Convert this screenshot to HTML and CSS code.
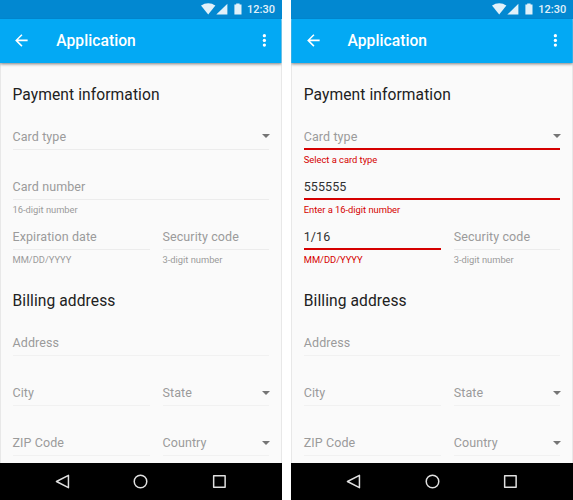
FILE: index.html
```html
<!DOCTYPE html>
<html lang="en">
<head>
<meta charset="utf-8">
<title>Application</title>
<link rel="stylesheet" href="styles.css">
</head>
<body>
<svg class="defs" aria-hidden="true">
  <symbol id="status" viewBox="0 0 45 13">
    <path d="M0 2.6C4.2-.7 10.3-.7 14.4 2.6L7.2 11.6z"/>
    <path d="M26.4.7v10.9H15.3z"/>
    <path d="M33.4 1.5h1.8V.4h3.4v1.1h1.9v10.1h-7.1z"/>
  </symbol>
  <symbol id="back" viewBox="0 0 24 24"><path d="M20 11H7.83l5.59-5.59L12 4l-8 8 8 8 1.41-1.41L7.83 13H20v-2z"/></symbol>
  <symbol id="more" viewBox="0 0 24 24"><circle cx="12" cy="6" r="2.1"/><circle cx="12" cy="12" r="2.1"/><circle cx="12" cy="18" r="2.1"/></symbol>
  <symbol id="nav-back" viewBox="0 0 16 16"><path d="M13.6 2.2v11.6L2.3 8z"/></symbol>
  <symbol id="nav-home" viewBox="0 0 16 16"><circle cx="8" cy="8" r="5.9"/></symbol>
  <symbol id="nav-recent" viewBox="0 0 16 16"><rect x="2.5" y="2.5" width="10.8" height="10.8"/></symbol>
</svg>
<main class="screens">
  <section class="phone">
    <div class="status-bar"><svg class="status-icons"><use href="#status"/></svg><span>12:30</span></div>
    <header class="app-bar"><svg class="icon"><use href="#back"/></svg><h1>Application</h1><svg class="icon"><use href="#more"/></svg></header>
    <div class="form">
      <h2>Payment information</h2>
      <div class="field select"><div class="value">Card type</div></div>
      <div class="field"><div class="value">Card number</div><div class="helper">16-digit number</div></div>
      <div class="row">
        <div class="field"><div class="value">Expiration date</div><div class="helper">MM/DD/YYYY</div></div>
        <div class="field"><div class="value">Security code</div><div class="helper">3-digit number</div></div>
      </div>
      <h2 class="billing">Billing address</h2>
      <div class="field faint"><div class="value">Address</div></div>
      <div class="row">
        <div class="field faint"><div class="value">City</div></div>
        <div class="field faint select"><div class="value">State</div></div>
      </div>
      <div class="row">
        <div class="field faint"><div class="value">ZIP Code</div></div>
        <div class="field faint select"><div class="value">Country</div></div>
      </div>
    </div>
    <nav class="nav-bar"><svg><use href="#nav-back"/></svg><svg><use href="#nav-home"/></svg><svg><use href="#nav-recent"/></svg></nav>
  </section>
  <section class="phone">
    <div class="status-bar"><svg class="status-icons"><use href="#status"/></svg><span>12:30</span></div>
    <header class="app-bar"><svg class="icon"><use href="#back"/></svg><h1>Application</h1><svg class="icon"><use href="#more"/></svg></header>
    <div class="form">
      <h2>Payment information</h2>
      <div class="field select error"><div class="value">Card type</div><div class="helper">Select a card type</div></div>
      <div class="field error filled"><div class="value">555555</div><div class="helper">Enter a 16-digit number</div></div>
      <div class="row">
        <div class="field error filled"><div class="value">1/16</div><div class="helper">MM/DD/YYYY</div></div>
        <div class="field"><div class="value">Security code</div><div class="helper">3-digit number</div></div>
      </div>
      <h2 class="billing">Billing address</h2>
      <div class="field faint"><div class="value">Address</div></div>
      <div class="row">
        <div class="field faint"><div class="value">City</div></div>
        <div class="field faint select"><div class="value">State</div></div>
      </div>
      <div class="row">
        <div class="field faint"><div class="value">ZIP Code</div></div>
        <div class="field faint select"><div class="value">Country</div></div>
      </div>
    </div>
    <nav class="nav-bar"><svg><use href="#nav-back"/></svg><svg><use href="#nav-home"/></svg><svg><use href="#nav-recent"/></svg></nav>
  </section>
</main>
</body>
</html>
```
FILE: styles.css
```css
* { box-sizing: border-box; }
body { margin: 0; background: #fff; font-family: Roboto, sans-serif; overflow: hidden; }
.defs { display: none; }
.screens { display: flex; gap: 9.75px; width: 573px; height: 500px; }
.phone { display: flex; flex-direction: column; flex: none; width: 281.5px; height: 500px; }
.status-bar { display: flex; align-items: center; justify-content: flex-end; height: 18.75px; padding-right: 6.5px; background: #0288d1; color: #e1f1fa; font-size: 11px; font-weight: 500; }
.status-icons { width: 45px; height: 13px; margin-right: 1px; fill: #e1f1fa; }
.app-bar { display: flex; align-items: center; flex: none; height: 43.75px; padding: 0 8px 0 12.4px; background: #03a9f4; color: #fff; box-shadow: 0 1px 3px rgba(0,0,0,.5); z-index: 1; clip-path: inset(0 0 -8px 0); }
.app-bar h1 { flex: 1; margin: 0 0 0 25.1px; padding-top: 1px; font-size: 15.6px; font-weight: 500; line-height: 20px; letter-spacing: .06px; }
.icon { width: 18.75px; height: 18.75px; fill: #fff; }
.form { flex: 1; min-height: 0; overflow: hidden; padding: 21.5px 11.5px 0; background: #fafafa; border: solid #e8e8e8; border-width: 0 1px; }
h2 { margin: 0; height: 40px; font-size: 15.6px; font-weight: 400; line-height: 22px; letter-spacing: .08px; color: #212121; }
h2.billing { height: 56px; padding-top: 16px; }
.field { position: relative; height: 50px; color: #9b9b9b; }
.value { height: 26px; border-bottom: 1px solid #ececec; font-size: 12.5px; line-height: 25px; letter-spacing: .09px; }
.helper { padding-top: 3px; font-size: 9.375px; line-height: 14px; letter-spacing: -.02px; }
.row { display: grid; grid-template-columns: 137.5px 1fr; gap: 12.5px; }
.select::after { content: ""; position: absolute; right: -1px; top: 10px; border: 4px solid transparent; border-top-color: #757575; border-bottom: 0; }
.filled .value { color: #303030; }
.error .value { border-bottom: 2px solid #d50000; }
.error .helper { color: #d50000; }
.faint .value { border-bottom-color: #f1f1f1; }
.faint.select::after { top: 10.5px; }
.nav-bar { display: flex; align-items: center; justify-content: space-between; flex: none; height: 37.5px; padding: 0 53.5px; background: #000; }
.nav-bar svg { width: 17px; height: 17px; fill: none; stroke: #e0e0e0; stroke-width: 1.4; stroke-linejoin: round; }
```
